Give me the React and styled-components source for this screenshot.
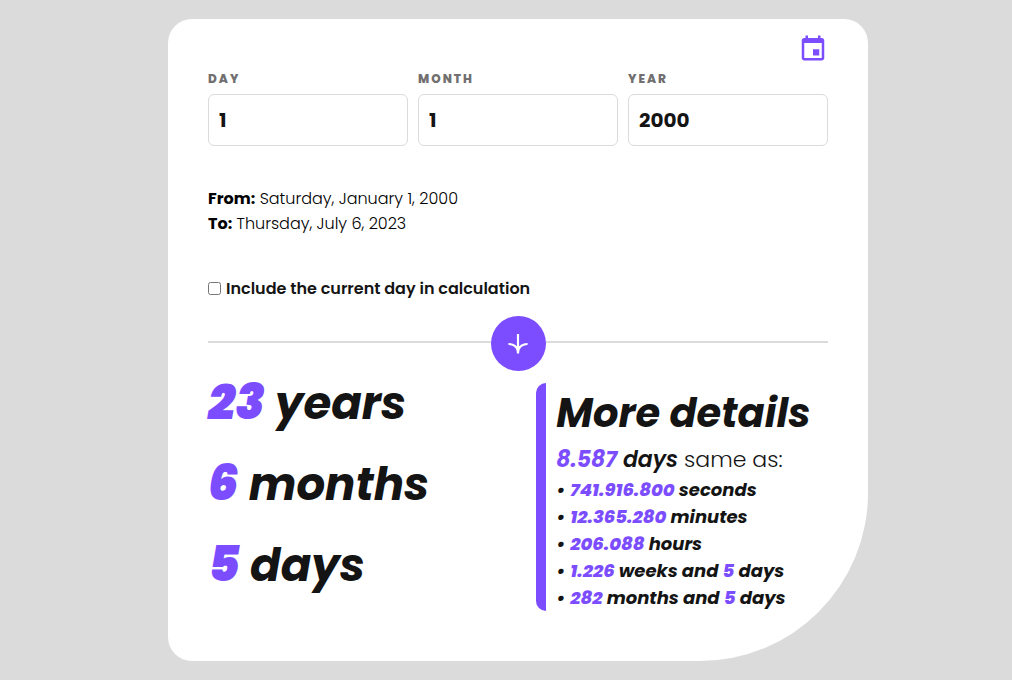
import React, { useState } from "react";
import styled, { createGlobalStyle } from "styled-components";

const violet = "#7c4dff";
const ink = "#141414";

const GlobalStyle = createGlobalStyle`
  *, *::before, *::after { box-sizing: border-box; }
  body {
    margin: 0;
    background: #dbdbdb;
    color: ${ink};
    font-family: Poppins, Inter, "Open Sans", sans-serif;
    font-size: 16px;
  }
`;

const Page = styled.main`
  min-height: 100vh;
  display: flex;
  align-items: center;
  justify-content: center;
  padding: 16px 0 16px 24px;
`;

const Card = styled.form`
  width: 100%;
  max-width: 700px;
  padding: 14px 40px 50px;
  background: #fff;
  border-radius: 24px 24px 168px 24px;
`;

const Toolbar = styled.div`
  display: flex;
  justify-content: flex-end;
`;

const IconButton = styled.button`
  display: flex;
  padding: 0;
  border: 0;
  background: none;
  color: ${violet};
  cursor: pointer;
`;

const Fields = styled.div`
  display: grid;
  grid-template-columns: repeat(3, 1fr);
  gap: 10px;
  margin-top: 7px;
`;

const Field = styled.label`
  display: grid;
  gap: 6px;
`;

const FieldName = styled.span`
  color: #716f6f;
  font-size: 12px;
  font-weight: 800;
  line-height: 18px;
  letter-spacing: 2px;
`;

const FieldInput = styled.input`
  width: 100%;
  height: 52px;
  padding: 0 10px;
  border: 1px solid #dbdbdb;
  border-radius: 6px;
  background: #fff;
  color: ${ink};
  font: inherit;
  font-size: 20px;
  font-weight: 700;
`;

const Range = styled.div`
  margin-top: 40px;
  color: #000;
  font-weight: 300;
  line-height: 25px;

  p { margin: 0; }
  strong { font-weight: 700; }
`;

const CheckRow = styled.label`
  display: flex;
  align-items: center;
  gap: 5px;
  margin: 40px 0 15px;
  font-weight: 600;
  line-height: 25px;
`;

const Checkbox = styled.input`
  width: 13px;
  height: 13px;
  margin: 0;
`;

const Divider = styled.div`
  display: flex;
  align-items: center;

  &::before, &::after {
    content: "";
    flex: 1;
    height: 2px;
    margin-bottom: 4px;
    background: #dbdbdb;
  }
`;

const SubmitButton = styled.button`
  display: flex;
  align-items: center;
  justify-content: center;
  width: 55px;
  height: 55px;
  padding: 0;
  border: 0;
  border-radius: 50%;
  background: ${violet};
  color: #fff;
  cursor: pointer;
`;

const Results = styled.div`
  display: grid;
  grid-template-columns: 9fr 8fr;
  align-items: start;
  margin-top: 12px;
`;

const Age = styled.div`
  display: grid;
  gap: 40px;
`;

const AgeLine = styled.p`
  margin: 0;
  font-size: 45px;
  font-style: italic;
  font-weight: 700;
  line-height: 41px;
`;

const Value = styled.span`
  color: ${violet};
  font-weight: 800;
`;

const BigValue = styled(Value)`
  font-size: 48px;
  font-weight: 900;
  line-height: 20px;
`;

const Details = styled.section`
  padding-left: 10px;
  border-left: 10px solid ${violet};
  border-radius: 10px 0 0 10px;
  white-space: nowrap;
`;

const DetailsTitle = styled.h2`
  margin: 0;
  font-size: 40px;
  font-style: italic;
  font-weight: 700;
  line-height: 60px;
`;

const Summary = styled.p`
  margin: 0;
  font-size: 22px;
  font-weight: 300;
  line-height: 33px;

  em { font-weight: 600; }
  ${Value} { font-weight: 700; }
`;

const DetailList = styled.ul`
  margin: 0;
  padding: 0;
  list-style: none;
  font-size: 18px;
  font-style: italic;
  font-weight: 700;
  line-height: 27px;
`;

const DetailItem = styled.li`
  display: flex;
  gap: 5px;

  &::before { content: "•"; }
`;

function CalendarIcon() {
  return (
    <svg width="30" height="30" viewBox="0 0 24 24" fill="currentColor" aria-hidden="true">
      <path d="M5 22h14c1.103 0 2-.897 2-2V6c0-1.103-.897-2-2-2h-1V2h-2v2H8V2H6v2H5c-1.103 0-2 .897-2 2v14c0 1.103.897 2 2 2zM19 8l.001 12H5V8h14z" />
      <path d="M12 13h5v5h-5z" />
    </svg>
  );
}

function ArrowIcon() {
  return (
    <svg width="20" height="20" viewBox="0 0 46 46" fill="none" stroke="currentColor" strokeWidth="5" aria-hidden="true">
      <path d="M1 23c7.333-.333 22 3.600 22 22V0m22 23c-7.333-.333-22 3.600-22 22" />
    </svg>
  );
}

const fields = [
  ["day", "DAY"],
  ["month", "MONTH"],
  ["year", "YEAR"],
];

const age = [
  ["23", "years"],
  ["6", "months"],
  ["5", "days"],
];

const details = [
  [["741.916.800", "seconds"]],
  [["12.365.280", "minutes"]],
  [["206.088", "hours"]],
  [["1.226", "weeks and "], ["5", "days"]],
  [["282", "months and "], ["5", "days"]],
];

export default function App() {
  const [date, setDate] = useState({ day: "1", month: "1", year: "2000" });

  return (
    <>
      <GlobalStyle />
      <Page>
        <Card onSubmit={(e) => e.preventDefault()}>
          <Toolbar>
            <IconButton type="button" aria-label="Pick a date">
              <CalendarIcon />
            </IconButton>
          </Toolbar>

          <Fields>
            {fields.map(([key, name]) => (
              <Field key={key}>
                <FieldName>{name}</FieldName>
                <FieldInput
                  inputMode="numeric"
                  value={date[key]}
                  onChange={(e) => setDate({ ...date, [key]: e.target.value })}
                />
              </Field>
            ))}
          </Fields>

          <Range>
            <p><strong>From:</strong> Saturday, January 1, 2000</p>
            <p><strong>To:</strong> Thursday, July 6, 2023</p>
          </Range>

          <CheckRow>
            <Checkbox type="checkbox" />
            Include the current day in calculation
          </CheckRow>

          <Divider>
            <SubmitButton type="submit" aria-label="Calculate">
              <ArrowIcon />
            </SubmitButton>
          </Divider>

          <Results>
            <Age>
              {age.map(([value, unit]) => (
                <AgeLine key={unit}>
                  <BigValue>{value}</BigValue> {unit}
                </AgeLine>
              ))}
            </Age>

            <Details>
              <DetailsTitle>More details</DetailsTitle>
              <Summary>
                <em><Value>8.587</Value> days</em> same as:
              </Summary>
              <DetailList>
                {details.map((parts) => (
                  <DetailItem key={parts[0][1]}>
                    <span>
                      {parts.map(([value, unit]) => (
                        <React.Fragment key={unit}>
                          <Value>{value}</Value> {unit}
                        </React.Fragment>
                      ))}
                    </span>
                  </DetailItem>
                ))}
              </DetailList>
            </Details>
          </Results>
        </Card>
      </Page>
    </>
  );
}
